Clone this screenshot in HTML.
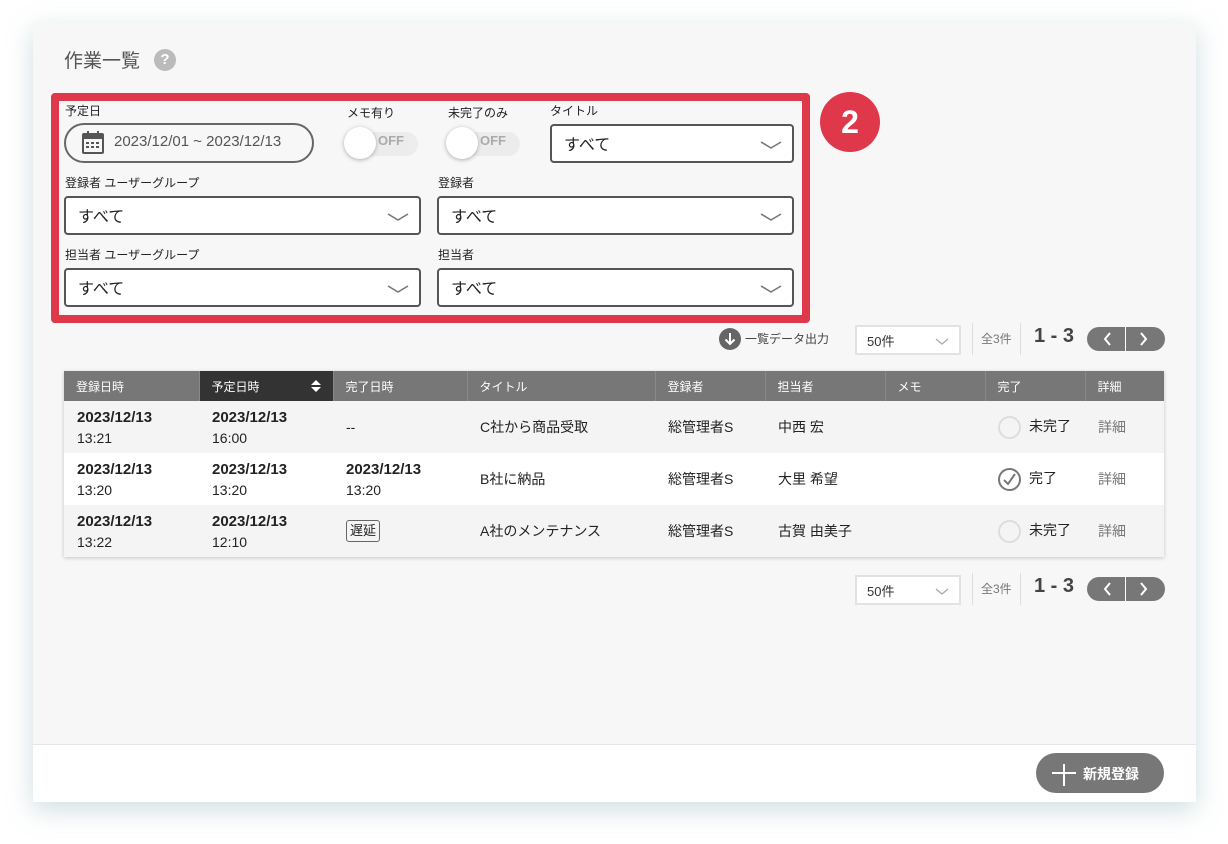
<!DOCTYPE html>
<html><head><meta charset="utf-8"><style>
*{box-sizing:border-box;margin:0;padding:0}
body{width:1228px;height:844px;background:#fff;font-family:"Liberation Sans","Noto Sans CJK JP",sans-serif;color:#222;position:relative;overflow:hidden}
.panel{position:absolute;left:33px;top:22px;width:1163px;height:780px;background:#f7f7f7;box-shadow:0 8px 24px rgba(120,160,170,.35)}
.footer{position:absolute;left:33px;top:744px;width:1163px;height:58px;background:#fff;border-top:1px solid #e6e6e6}
.a{position:absolute}
.lbl{position:absolute;font-size:12px;color:#222}
.sel{position:absolute;height:39px;border:2px solid #555;border-radius:4px;background:#fff;font-size:16px;padding:5px 12px;color:#222}
.sel svg{position:absolute;right:10px;top:15px}
.tog{position:absolute;width:76px;height:34px}
.tog .tr{position:absolute;left:4px;top:5px;width:70px;height:24px;border-radius:12px;background:#ececec}
.tog .kn{position:absolute;left:0;top:0;width:32px;height:32px;border-radius:50%;background:#fff;box-shadow:0 1px 4px rgba(0,0,0,.3)}
.tog span{position:absolute;left:34px;top:6px;font-size:13px;font-weight:bold;color:#aaa}
table{position:absolute;left:64px;top:371px;width:1100px;border-collapse:collapse;box-shadow:0 1px 4px rgba(0,0,0,.2)}
th{background:#777;color:#fff;font-weight:normal;font-size:12px;text-align:left;padding:0 12px;height:30px;border-left:1px solid #888}
th:first-child{border-left:none}
th.act{background:#333}
td{font-size:14px;padding:0 13px;height:52px;line-height:20px}
tr.g td{background:#f4f4f4}tr.w td{background:#fff}
b{font-weight:bold;font-size:15px}
.circ{display:inline-block;width:23px;height:23px;border:2px solid #ddd;border-radius:50%;vertical-align:middle;margin-right:8px}
.det{color:#777}
.tag{display:inline-block;border:1px solid #666;border-radius:3px;font-size:13px;padding:1px 3px;line-height:18px}
.pg{position:absolute;font-size:12px}
.psel{position:absolute;width:106px;height:30px;border:2px solid #e2e2e2;background:#fff;font-size:13px;padding:4px 10px;color:#333}
.pbtn{position:absolute;width:78px;height:24px;border-radius:12px;background:#777}
</style></head><body>
<div class="panel"></div>
<div class="footer"></div>
<div class="a" style="left:64px;top:46px;font-size:19px;color:#555">作業一覧</div>
<div class="a" style="left:154px;top:49px;width:22px;height:22px;border-radius:50%;background:#bbb;color:#fff;font-weight:bold;font-size:15px;text-align:center;line-height:22px">?</div>

<div class="a" style="left:51px;top:93px;width:759px;height:230px;border:8px solid #e0384b;border-radius:4px"></div>
<div class="a" style="left:820px;top:92px;width:60px;height:60px;border-radius:50%;background:#e0384b;color:#fff;font-size:32px;font-weight:bold;text-align:center;line-height:60px">2</div>

<div class="lbl" style="left:65px;top:102px">予定日</div>
<div class="a" style="left:64px;top:123px;width:250px;height:40px;border:2px solid #666;border-radius:20px;background:#f7f7f7;font-size:15px;color:#555;padding:8px 0 0 48px">2023/12/01 ~ 2023/12/13</div>
<svg class="a" style="left:82px;top:130px" width="22" height="24" viewBox="0 0 22 24"><rect x="1" y="4" width="20" height="19" rx="1" fill="none" stroke="#555" stroke-width="2"/><rect x="1" y="4" width="20" height="5" fill="#555"/><rect x="5" y="1" width="2" height="5" fill="#555"/><rect x="15" y="1" width="2" height="5" fill="#555"/><g fill="#555"><rect x="4" y="12" width="3" height="2"/><rect x="9" y="12" width="3" height="2"/><rect x="14" y="12" width="3" height="2"/><rect x="4" y="16" width="3" height="2"/><rect x="9" y="16" width="3" height="2"/><rect x="14" y="16" width="3" height="2"/></g></svg>

<div class="lbl" style="left:347px;top:104px">メモ有り</div>
<div class="tog" style="left:344px;top:127px"><div class="tr"></div><div class="kn"></div><span>OFF</span></div>
<div class="lbl" style="left:448px;top:104px">未完了のみ</div>
<div class="tog" style="left:446px;top:127px"><div class="tr"></div><div class="kn"></div><span>OFF</span></div>

<div class="lbl" style="left:550px;top:102px">タイトル</div>
<div class="sel" style="left:550px;top:124px;width:244px">すべて<svg width="22" height="8"><path d="M1 1 L11 7 L21 1" fill="none" stroke="#777" stroke-width="1.6"/></svg></div>

<div class="lbl" style="left:65px;top:174px">登録者 ユーザーグループ</div>
<div class="sel" style="left:64px;top:196px;width:357px">すべて<svg width="22" height="8"><path d="M1 1 L11 7 L21 1" fill="none" stroke="#777" stroke-width="1.6"/></svg></div>
<div class="lbl" style="left:438px;top:174px">登録者</div>
<div class="sel" style="left:437px;top:196px;width:357px">すべて<svg width="22" height="8"><path d="M1 1 L11 7 L21 1" fill="none" stroke="#777" stroke-width="1.6"/></svg></div>

<div class="lbl" style="left:65px;top:246px">担当者 ユーザーグループ</div>
<div class="sel" style="left:64px;top:268px;width:357px">すべて<svg width="22" height="8"><path d="M1 1 L11 7 L21 1" fill="none" stroke="#777" stroke-width="1.6"/></svg></div>
<div class="lbl" style="left:438px;top:246px">担当者</div>
<div class="sel" style="left:437px;top:268px;width:357px">すべて<svg width="22" height="8"><path d="M1 1 L11 7 L21 1" fill="none" stroke="#777" stroke-width="1.6"/></svg></div>

<svg class="a" style="left:719px;top:328px" width="22" height="22"><circle cx="11" cy="11" r="11" fill="#666"/><path d="M11 5 V16 M6.5 11.5 L11 16 L15.5 11.5" fill="none" stroke="#fff" stroke-width="2"/></svg>
<div class="pg" style="left:745px;top:330px;color:#444">一覧データ出力</div>
<div class="psel" style="left:855px;top:325px">50件<svg class="a" style="right:10px;top:11px" width="14" height="7"><path d="M1 1 L7 6 L13 1" fill="none" stroke="#aaa" stroke-width="1.3"/></svg></div>
<div class="a" style="left:972px;top:323px;width:1px;height:32px;background:#ddd"></div>
<div class="pg" style="left:981px;top:330px;color:#777">全3件</div>
<div class="a" style="left:1020px;top:323px;width:1px;height:32px;background:#ddd"></div>
<div class="a" style="left:1034px;top:325px;font-size:20px;font-weight:bold;color:#444">1 - 3</div>
<div class="pbtn" style="left:1087px;top:327px"><div class="a" style="left:38px;top:0;width:1px;height:24px;background:#fff"></div><svg class="a" style="left:0;top:0" width="78" height="24"><path d="M23 6 L18 12 L23 18 M54 6 L59 12 L54 18" fill="none" stroke="#fff" stroke-width="2"/></svg></div>

<table>
<tr><th style="width:135px">登録日時</th><th class="act" style="width:134px">予定日時<svg style="float:right;margin-top:1px" width="10" height="14"><path d="M0 6 L5 1 L10 6Z M0 8 L5 13 L10 8Z" fill="#fff"/></svg></th><th style="width:134px">完了日時</th><th style="width:188px">タイトル</th><th style="width:110px">登録者</th><th style="width:120px">担当者</th><th style="width:100px">メモ</th><th style="width:100px">完了</th><th>詳細</th></tr>
<tr class="g"><td><b>2023/12/13</b><br>13:21</td><td><b>2023/12/13</b><br>16:00</td><td>--</td><td>C社から商品受取</td><td>総管理者S</td><td>中西 宏</td><td></td><td><span class="circ"></span>未完了</td><td class="det">詳細</td></tr>
<tr class="w"><td><b>2023/12/13</b><br>13:20</td><td><b>2023/12/13</b><br>13:20</td><td><b>2023/12/13</b><br>13:20</td><td>B社に納品</td><td>総管理者S</td><td>大里 希望</td><td></td><td><svg style="vertical-align:middle;margin-right:8px" width="23" height="23"><circle cx="11.5" cy="11.5" r="10.5" fill="none" stroke="#777" stroke-width="2"/><path d="M6 12 L10 16 L17 6" fill="none" stroke="#777" stroke-width="2"/></svg>完了</td><td class="det">詳細</td></tr>
<tr class="g"><td><b>2023/12/13</b><br>13:22</td><td><b>2023/12/13</b><br>12:10</td><td><span class="tag">遅延</span></td><td>A社のメンテナンス</td><td>総管理者S</td><td>古賀 由美子</td><td></td><td><span class="circ"></span>未完了</td><td class="det">詳細</td></tr>
</table>

<div class="psel" style="left:855px;top:575px">50件<svg class="a" style="right:10px;top:11px" width="14" height="7"><path d="M1 1 L7 6 L13 1" fill="none" stroke="#aaa" stroke-width="1.3"/></svg></div>
<div class="a" style="left:972px;top:573px;width:1px;height:32px;background:#ddd"></div>
<div class="pg" style="left:981px;top:580px;color:#777">全3件</div>
<div class="a" style="left:1020px;top:573px;width:1px;height:32px;background:#ddd"></div>
<div class="a" style="left:1034px;top:575px;font-size:20px;font-weight:bold;color:#444">1 - 3</div>
<div class="pbtn" style="left:1087px;top:577px"><div class="a" style="left:38px;top:0;width:1px;height:24px;background:#fff"></div><svg class="a" style="left:0;top:0" width="78" height="24"><path d="M23 6 L18 12 L23 18 M54 6 L59 12 L54 18" fill="none" stroke="#fff" stroke-width="2"/></svg></div>

<div class="a" style="left:1036px;top:753px;width:128px;height:40px;border-radius:20px;background:#777;color:#fff;font-size:14px;font-weight:bold;padding:11px 0 0 47px">新規登録</div>
<svg class="a" style="left:1052px;top:760px" width="24" height="26"><path d="M0 13 H24 M12 4 V26" stroke="#fff" stroke-width="2"/></svg>
</body></html>
